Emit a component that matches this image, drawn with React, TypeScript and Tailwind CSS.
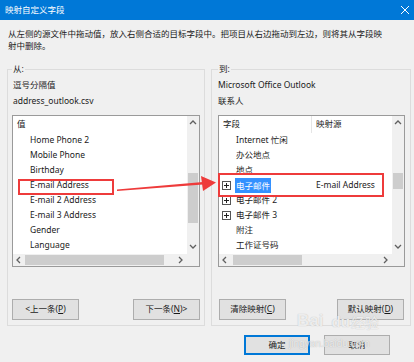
import React from "react";

const FONT = '"Noto Sans", "Noto Sans CJK SC", sans-serif';

function Chevron({ dir }: { dir: "up" | "down" | "left" | "right" }) {
  const d =
    dir === "up"
      ? "M1 5 L4 2 L7 5"
      : dir === "down"
      ? "M1 2 L4 5 L7 2"
      : dir === "left"
      ? "M5 1 L2 4 L5 7"
      : "M2 1 L5 4 L2 7";
  return (
    <svg width="8" height="8" viewBox="0 0 8 8" className="block">
      <path d={d} fill="none" stroke="#606060" strokeWidth="1.3" />
    </svg>
  );
}

function VScroll({ thumbTop, thumbH }: { thumbTop: number; thumbH: number }) {
  return (
    <div className="w-[12px] h-full bg-[#f0f0f0] flex flex-col items-center">
      <div className="h-[14px] flex items-center justify-center">
        <Chevron dir="up" />
      </div>
      <div className="flex-1 w-full px-[1px]">
        <div style={{ marginTop: thumbTop, height: thumbH }} className="w-full bg-[#cdcdcd]" />
      </div>
      <div className="h-[14px] flex items-center justify-center">
        <Chevron dir="down" />
      </div>
    </div>
  );
}

function HScroll({ thumbLeft, thumbW }: { thumbLeft: number; thumbW: number }) {
  return (
    <div className="h-[12px] flex">
      <div className="flex-1 flex items-center bg-[#f0f0f0]">
        <div className="w-[12px] flex items-center justify-center">
          <Chevron dir="left" />
        </div>
        <div className="flex-1 h-full py-[1px]">
          <div style={{ marginLeft: thumbLeft, width: thumbW }} className="h-full bg-[#cdcdcd]" />
        </div>
        <div className="w-[12px] flex items-center justify-center">
          <Chevron dir="right" />
        </div>
      </div>
      <div className="w-[12px] bg-[#f0f0f0]" />
    </div>
  );
}

function Btn({ label, mn, pre, post, className = "" }: { label: string; mn: string; pre?: string; post?: string; className?: string }) {
  return (
    <div
      className={
        "w-[67px] h-[21px] bg-[#e1e1e1] border border-[#adadad] flex items-center justify-center text-[8.5px] text-[#1a1a1a] " +
        className
      }
    >
      {pre}
      {label}(<span className="underline">{mn}</span>){post}
    </div>
  );
}

function PlusBox() {
  return (
    <svg width="9" height="9" viewBox="0 0 9 9" className="block">
      <rect x="0.5" y="0.5" width="8" height="8" fill="#fff" stroke="#555" />
      <path d="M2 4.5 H7 M4.5 2 V7" stroke="#222" strokeWidth="1" />
    </svg>
  );
}

export default function App() {
  const leftItems = [
    "Home Phone 2",
    "Mobile Phone",
    "Birthday",
    "E-mail Address",
    "E-mail 2 Address",
    "E-mail 3 Address",
    "Gender",
    "Language",
  ];
  const rightItems: { t: string; plus?: boolean; sel?: boolean; src?: string }[] = [
    { t: "Internet 忙闲" },
    { t: "办公地点" },
    { t: "地点" },
    { t: "电子邮件", plus: true, sel: true, src: "E-mail Address" },
    { t: "电子邮件 2", plus: true },
    { t: "电子邮件 3", plus: true },
    { t: "附注" },
    { t: "工作证号码" },
  ];

  return (
    <div
      className="relative w-[414px] h-[362px] bg-[#f0f0f0] overflow-hidden text-[#1a1a1a] text-[8.5px]"
      style={{ fontFamily: FONT }}
    >
      {/* Title bar */}
      <div className="h-[20px] bg-[#0078d7] flex items-center justify-between pl-[5px] pr-[4px] text-white">
        <span className="text-[8.5px] leading-[12px]">映射自定义字段</span>
        <svg width="10" height="10" viewBox="0 0 10 10" className="block">
          <path d="M1 1 L9 9 M9 1 L1 9" stroke="#fff" strokeWidth="1" />
        </svg>
      </div>

      {/* Instruction */}
      <div className="px-[8px] pt-[8px] text-[8.5px] leading-[12px]">
        <div className="whitespace-nowrap">从左侧的源文件中拖动值，放入右侧合适的目标字段中。把项目从右边拖动到左边，则将其从字段映</div>
        <div>射中删除。</div>
      </div>

      {/* Group boxes */}
      <div className="flex pl-[7px] gap-[6px] mt-[11px]">
        {/* Left */}
        <fieldset className="w-[198px] h-[263px] border border-[#dcdcdc] px-[4px] pb-[5px]">
          <legend className="leading-[12px] px-[1px]">从:</legend>
          <div className="h-[16px] leading-[16px] mt-[2px] pl-[1px]">逗号分隔值</div>
          <div className="h-[16px] leading-[16px] pl-[1px]">address_outlook.csv</div>
          <div className="mt-[6px] w-[188px] h-[152px] border border-[#9a9a9a] bg-white flex flex-col">
            <div className="flex flex-1 min-h-0">
              <div className="flex-1 flex flex-col">
                <div className="h-[17px] flex items-center pl-[4px]">值</div>
                {leftItems.map((s) => (
                  <div key={s} className="h-[15px] flex items-center pl-[17px] whitespace-nowrap">
                    {s}
                  </div>
                ))}
              </div>
              <VScroll thumbTop={43} thumbH={50} />
            </div>
            <HScroll thumbLeft={0} thumbW={139} />
          </div>
          <div className="flex justify-between mt-[32px]">
            <Btn label="上一条" mn="P" pre="<" />
            <Btn label="下一条" mn="N" post=">" />
          </div>
        </fieldset>

        {/* Right */}
        <fieldset className="w-[200px] h-[263px] border border-[#dcdcdc] pl-[6px] pr-[5px] pb-[5px]">
          <legend className="leading-[12px] px-[1px]">到:</legend>
          <div className="h-[16px] leading-[16px] mt-[2px]">Microsoft Office Outlook</div>
          <div className="h-[16px] leading-[16px]">联系人</div>
          <div className="mt-[6px] w-[187px] h-[152px] border border-[#9a9a9a] bg-white flex flex-col">
            <div className="flex flex-1 min-h-0">
              <div className="flex-1 flex flex-col">
                <div className="h-[17px] flex items-stretch">
                  <div className="w-[93px] flex items-center pl-[4px] border-r border-[#e5e5e5]">字段</div>
                  <div className="flex items-center pl-[4px]">映射源</div>
                </div>
                {rightItems.map((r) => (
                  <div key={r.t} className="h-[15px] flex items-center whitespace-nowrap">
                    <div className="w-[16px] pl-[3px] flex items-center">{r.plus ? <PlusBox /> : null}</div>
                    <div className="w-[81px] flex items-center">
                      <span
                        className={
                          r.sel
                            ? "bg-[#3391ff] text-white px-[1px] h-[15px] leading-[15px]"
                            : "px-[1px]"
                        }
                      >
                        {r.t}
                      </span>
                    </div>
                    {r.src ? <span>{r.src}</span> : null}
                  </div>
                ))}
              </div>
              <VScroll thumbTop={43} thumbH={16} />
            </div>
            <HScroll thumbLeft={2} thumbW={69} />
          </div>
          <div className="flex justify-between mt-[32px] px-[1px]">
            <Btn label="清除映射" mn="C" />
            <Btn label="默认映射" mn="D" />
          </div>
        </fieldset>
      </div>

      {/* OK / Cancel */}
      <div className="flex justify-end gap-[14px] pr-[24px] mt-[9px]">
        <div className="w-[66px] h-[20px] bg-[#e1e1e1] border-2 border-[#0078d7] flex items-center justify-center">
          确定
        </div>
        <div className="w-[66px] h-[20px] bg-[#e1e1e1] border border-[#adadad] flex items-center justify-center">
          取消
        </div>
      </div>

      {/* Red annotation boxes and arrow */}
      <div className="absolute left-[18px] top-[179px] w-[96px] h-[16px] border-2 border-[#ee3b3b]" />
      <div className="absolute left-[218px] top-[173px] w-[166px] h-[24px] border-2 border-[#ee3b3b]" />
      <svg className="absolute left-0 top-0 pointer-events-none" width="414" height="362" viewBox="0 0 414 362">
        <polygon points="117,189.5 203,182 203,184.5 117,191" fill="#ee3b3b" />
        <polygon points="201,176 216,182.5 203,191" fill="#ee3b3b" />
      </svg>

      {/* Watermark */}
      <div
        className="absolute left-[297px] top-[312px] flex items-end leading-none text-white/75 pointer-events-none"
        style={{ fontFamily: '"Liberation Sans", sans-serif', textShadow: "0 0 1px #b0b0b0" }}
      >
        <span className="text-[17px] font-bold">Bai</span>
        <span className="text-[15px] font-bold ml-[8px]">du</span>
        <span className="text-[14px] ml-[1px]" style={{ fontFamily: '"Noto Sans CJK SC", sans-serif' }}>经验</span>
      </div>
      <div
        className="absolute left-[289px] top-[339px] text-[10px] leading-none text-white/75 pointer-events-none"
        style={{ fontFamily: '"Liberation Sans", sans-serif', textShadow: "0 0 1px #a0a0a0" }}
      >
        jingyan.baidu.com
      </div>
    </div>
  );
}
